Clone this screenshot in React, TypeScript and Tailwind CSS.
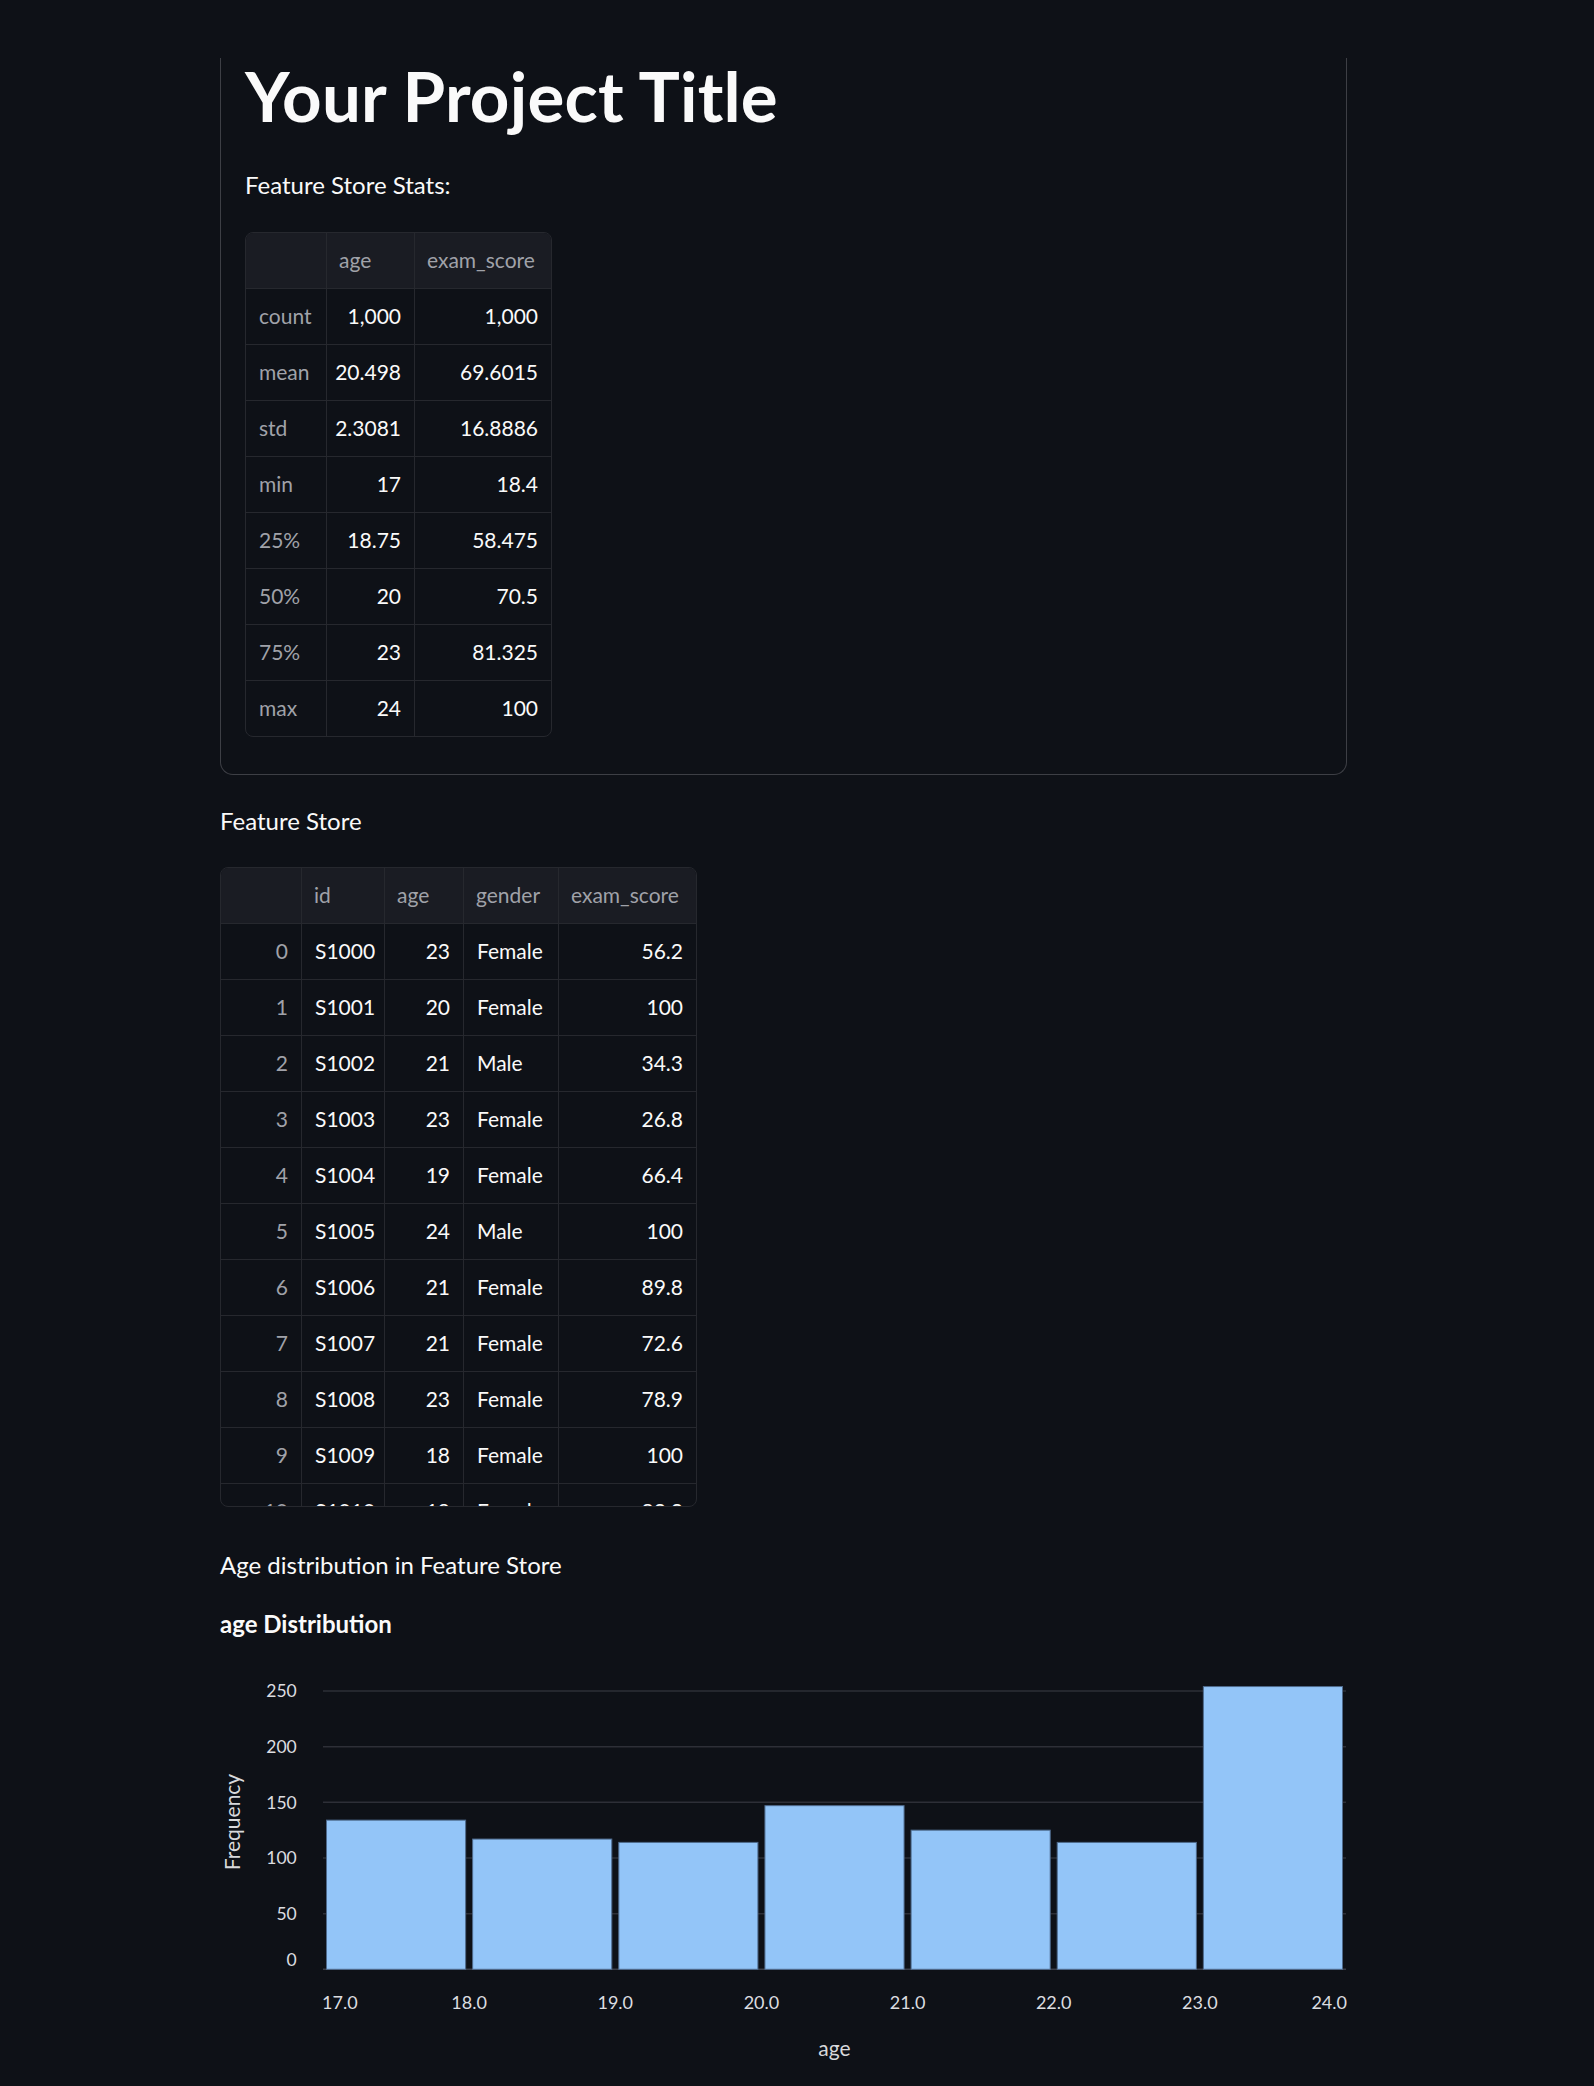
import React from 'react';

type Col = { label: string; width: string; align: 'left' | 'right'; index?: boolean };

const statsCols: Col[] = [
  { label: '', width: 'w-[81px]', align: 'left', index: true },
  { label: 'age', width: 'w-[88px]', align: 'right' },
  { label: 'exam_score', width: 'w-[136px]', align: 'right' },
];

const statsRows: string[][] = [
  ['count', '1,000', '1,000'],
  ['mean', '20.498', '69.6015'],
  ['std', '2.3081', '16.8886'],
  ['min', '17', '18.4'],
  ['25%', '18.75', '58.475'],
  ['50%', '20', '70.5'],
  ['75%', '23', '81.325'],
  ['max', '24', '100'],
];

const storeCols: Col[] = [
  { label: '', width: 'w-[81px]', align: 'right', index: true },
  { label: 'id', width: 'w-[83px]', align: 'left' },
  { label: 'age', width: 'w-[79px]', align: 'right' },
  { label: 'gender', width: 'w-[95px]', align: 'left' },
  { label: 'exam_score', width: 'w-[137px]', align: 'right' },
];

const storeRows: string[][] = [
  ['0', 'S1000', '23', 'Female', '56.2'],
  ['1', 'S1001', '20', 'Female', '100'],
  ['2', 'S1002', '21', 'Male', '34.3'],
  ['3', 'S1003', '23', 'Female', '26.8'],
  ['4', 'S1004', '19', 'Female', '66.4'],
  ['5', 'S1005', '24', 'Male', '100'],
  ['6', 'S1006', '21', 'Female', '89.8'],
  ['7', 'S1007', '21', 'Female', '72.6'],
  ['8', 'S1008', '23', 'Female', '78.9'],
  ['9', 'S1009', '18', 'Female', '100'],
  ['10', 'S1010', '19', 'Female', '83.3'],
];

function DataTable({ cols, rows, clip }: { cols: Col[]; rows: string[][]; clip?: boolean }) {
  return (
    <div
      className={`inline-block border border-[#26282e] rounded-[8px] overflow-hidden text-[21px] leading-none ${
        clip ? 'h-[640px]' : ''
      }`}
    >
      {/* header */}
      <div className="flex bg-[#1a1c23] border-b border-[#26282e]">
        {cols.map((c, i) => (
          <div
            key={i}
            className={`${c.width} h-[55px] flex items-center px-[12px] pb-[2px] text-[#a0a2a9] ${
              i < cols.length - 1 ? 'border-r border-[#26282e]' : ''
            }`}
          >
            {c.label}
          </div>
        ))}
      </div>
      {rows.map((r, ri) => (
        <div
          key={ri}
          className={`flex ${ri < rows.length - 1 ? 'border-b border-[#26282e]' : ''}`}
        >
          {r.map((v, ci) => {
            const c = cols[ci];
            return (
              <div
                key={ci}
                className={`${c.width} h-[55px] flex items-center px-[13px] pb-[2px] ${
                  c.align === 'right' ? 'justify-end' : 'justify-start'
                } ${c.index ? 'text-[#a0a2a9]' : 'text-[#fafafa]'} ${
                  ci < r.length - 1 ? 'border-r border-[#26282e]' : ''
                }`}
              >
                {v}
              </div>
            );
          })}
        </div>
      ))}
    </div>
  );
}

const counts = [134, 117, 114, 147, 125, 114, 254];

function AgeChart() {
  const left = 103;
  const right = 1126;
  const base = 319.3;
  const k = 278.3 / 250;
  const bin = (right - left) / 7;
  const ticks = [0, 50, 100, 150, 200, 250];
  const xl = ['17.0', '18.0', '19.0', '20.0', '21.0', '22.0', '23.0', '24.0'];
  return (
    <svg width="1127" height="430" className="block">
      {ticks.map((t) => (
        <line
          key={t}
          x1={left}
          x2={right}
          y1={base - t * k}
          y2={base - t * k}
          stroke={t === 0 ? '#3b3e48' : '#2d2f37'}
          strokeWidth="1.5"
        />
      ))}
      {counts.map((c, i) => (
        <rect
          key={i}
          x={left + i * bin + 3.5}
          y={base - c * k}
          width={bin - 7}
          height={c * k}
          fill="#93c5f8"
          stroke="#4e6a8c"
          strokeWidth="1"
        />
      ))}
      {ticks.map((t) => (
        <text
          key={t}
          x={76.7}
          y={t === 0 ? 316 : base - t * k + 6.3}
          textAnchor="end"
          fontSize="17.5"
          fill="#dcdde0"
        >
          {t}
        </text>
      ))}
      {xl.map((l, i) => (
        <text
          key={l}
          x={left + i * bin + (i === 0 ? -1 : i === 7 ? 1 : 0)}
          y={359}
          textAnchor={i === 0 ? 'start' : i === 7 ? 'end' : 'middle'}
          fontSize="18"
          fill="#dcdde0"
        >
          {l}
        </text>
      ))}
      <text x={614.5} y={406} textAnchor="middle" fontSize="21" fill="#d8d9dc">
        age
      </text>
      <text
        x={20}
        y={172}
        textAnchor="middle"
        fontSize="21"
        fill="#d8d9dc"
        transform="rotate(-90 20 172)"
      >
        Frequency
      </text>
    </svg>
  );
}

export default function App() {
  return (
    <div className="min-h-screen bg-[#0e1117] text-[#fafafa] font-['Lato','Noto_Sans',sans-serif]">
      <div className="ml-[220px] w-[1127px] pt-[58px] pb-[6px]">
        <div className="border-x border-b border-[#3d3f45] rounded-b-[13px] px-[24px] pt-[4px] pb-[31px]">
          <h1 className="text-[69px] leading-[68px] font-bold tracking-[0.2px]">Your Project Title</h1>
          <p className="mt-[43px] text-[24px] leading-[24px]">Feature Store Stats:</p>
          <div className="mt-[35px]">
            <DataTable cols={statsCols} rows={statsRows} />
          </div>
        </div>

        <p className="mt-[34px] text-[24px] leading-[24px]">Feature Store</p>
        <div className="mt-[34px]">
          <DataTable cols={storeCols} rows={storeRows} clip />
        </div>

        <p className="mt-[40px] text-[24px] leading-[24px]">Age distribution in Feature Store</p>
        <p className="mt-[35px] text-[24px] leading-[24px] font-bold">age Distribution</p>
        <div className="mt-[14px]">
          <AgeChart />
        </div>
      </div>
    </div>
  );
}
